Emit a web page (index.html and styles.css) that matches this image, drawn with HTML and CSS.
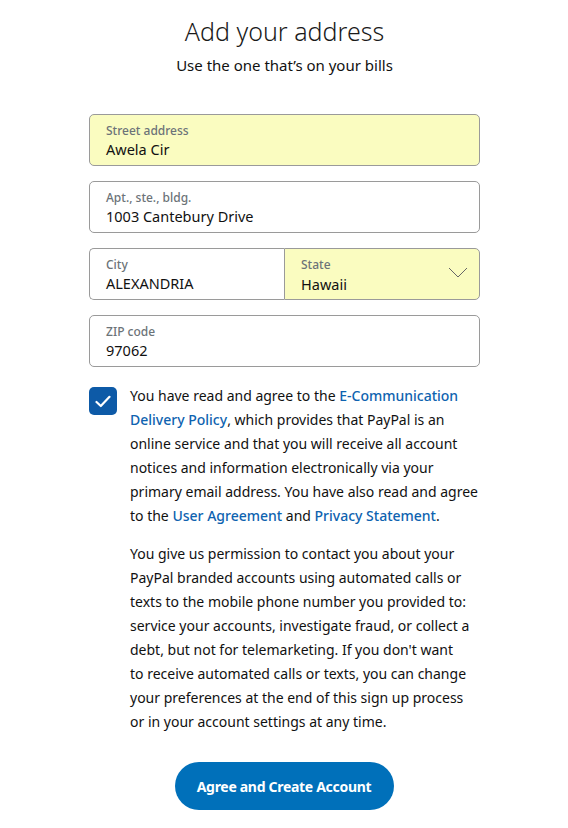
FILE: index.html
```html
<!DOCTYPE html>
<html lang="en">
<head>
<meta charset="utf-8">
<title>Add your address</title>
<link rel="stylesheet" href="styles.css">
</head>
<body>
<main class="page">
  <h1 class="title">Add your address</h1>
  <p class="subtitle">Use the one that’s on your bills</p>

  <form class="form">
    <div class="field filled">
      <span class="label">Street address</span>
      <span class="value">Awela Cir</span>
    </div>
    <div class="field">
      <span class="label">Apt., ste., bldg.</span>
      <span class="value">1003 Cantebury Drive</span>
    </div>
    <div class="row">
      <div class="field half left">
        <span class="label">City</span>
        <span class="value">ALEXANDRIA</span>
      </div>
      <div class="field half right filled select">
        <span class="label">State</span>
        <span class="value">Hawaii</span>
        <svg class="chevron" width="20" height="11" viewBox="0 0 20 11"><path d="M1 1 L10 10 L19 1" fill="none" stroke="#666" stroke-width="1"/></svg>
      </div>
    </div>
    <div class="field">
      <span class="label">ZIP code</span>
      <span class="value">97062</span>
    </div>

    <div class="consent">
      <span class="checkbox"><svg width="16" height="13" viewBox="0 0 16 13"><path d="M1.5 7 L5.8 11 L14.5 1.8" fill="none" stroke="#fff" stroke-width="2.2" stroke-linecap="round" stroke-linejoin="round"/></svg></span>
      <div class="consent-text">
        <p>You have read and agree to the <a href="#">E-Communication Delivery Policy</a>, which provides that PayPal is an online service and that you will receive all account notices and information electronically via your primary email address. You have also read and agree to the <a href="#">User Agreement</a> and <a href="#">Privacy Statement</a>.</p>
        <p>You give us permission to contact you about your PayPal branded accounts using automated calls or texts to the mobile phone number you provided to: service your accounts, investigate fraud, or collect a debt, but not for telemarketing. If you don't want to&nbsp;receive automated calls or texts, you can change your preferences at the end of this sign up process or in your account settings at any time.</p>
      </div>
    </div>

    <div class="actions">
      <button type="button" class="btn">Agree and Create Account</button>
    </div>
  </form>
</main>
</body>
</html>
```

FILE: styles.css
```css
html, body {
  margin: 0;
  padding: 0;
  background: #fff;
}
body {
  font-family: "Noto Sans", "Open Sans", sans-serif;
  color: #111;
}
.page {
  width: 391px;
  margin: 0 auto;
  padding: 14px 0 0 1px;
}
.title {
  margin: 0;
  text-align: center;
  font-weight: 300;
  font-size: 25px;
  line-height: 34px;
  color: #1a1a1a;
}
.subtitle {
  margin: 7px 0 0;
  text-align: center;
  font-size: 15px;
  line-height: 20px;
  color: #111;
}
.form {
  margin-top: 39px;
  display: flex;
  flex-direction: column;
  gap: 15px;
}
.field {
  position: relative;
  box-sizing: border-box;
  height: 52px;
  border: 1px solid #9a9a9a;
  border-radius: 5px;
  padding: 8px 16px 0;
  display: flex;
  flex-direction: column;
  background: #fff;
}
.field.filled {
  background: #fafcc0;
}
.label {
  font-size: 12px;
  line-height: 16px;
  font-weight: 500;
  color: #6c7378;
}
.value {
  font-size: 14.5px;
  line-height: 20px;
  color: #111;
}
.row {
  display: flex;
}
.half {
  flex: 1;
}
.half.left {
  border-radius: 5px 0 0 5px;
  border-right: none;
}
.half.right {
  border-radius: 0 5px 5px 0;
}
.select .value {
  margin-top: 1px;
}
.chevron {
  position: absolute;
  right: 11px;
  top: 18px;
}
.consent {
  display: flex;
  gap: 13px;
  margin-top: 2px;
}
.checkbox {
  flex: none;
  width: 28px;
  height: 28px;
  margin-top: 3px;
  border-radius: 5px;
  background: #0d5aa7;
  display: flex;
  align-items: center;
  justify-content: center;
}
.consent-text {
  flex: 1;
}
.consent-text p {
  margin: 0 0 14px;
  font-size: 14px;
  line-height: 24px;
  color: #111;
}
.consent-text p:last-child {
  margin-bottom: 0;
}
.consent-text a {
  color: #0e63b0;
  text-decoration: none;
  font-weight: 500;
}
.actions {
  display: flex;
  justify-content: center;
  margin-top: 13px;
}
.btn {
  height: 48px;
  width: 219px;
  border: none;
  border-radius: 24px;
  background: #0070ba;
  color: #fff;
  font-family: "Noto Sans", "Open Sans", sans-serif;
  font-weight: 700;
  font-size: 14px;
  letter-spacing: -0.3px;
  margin-left: -1px;
}
```
